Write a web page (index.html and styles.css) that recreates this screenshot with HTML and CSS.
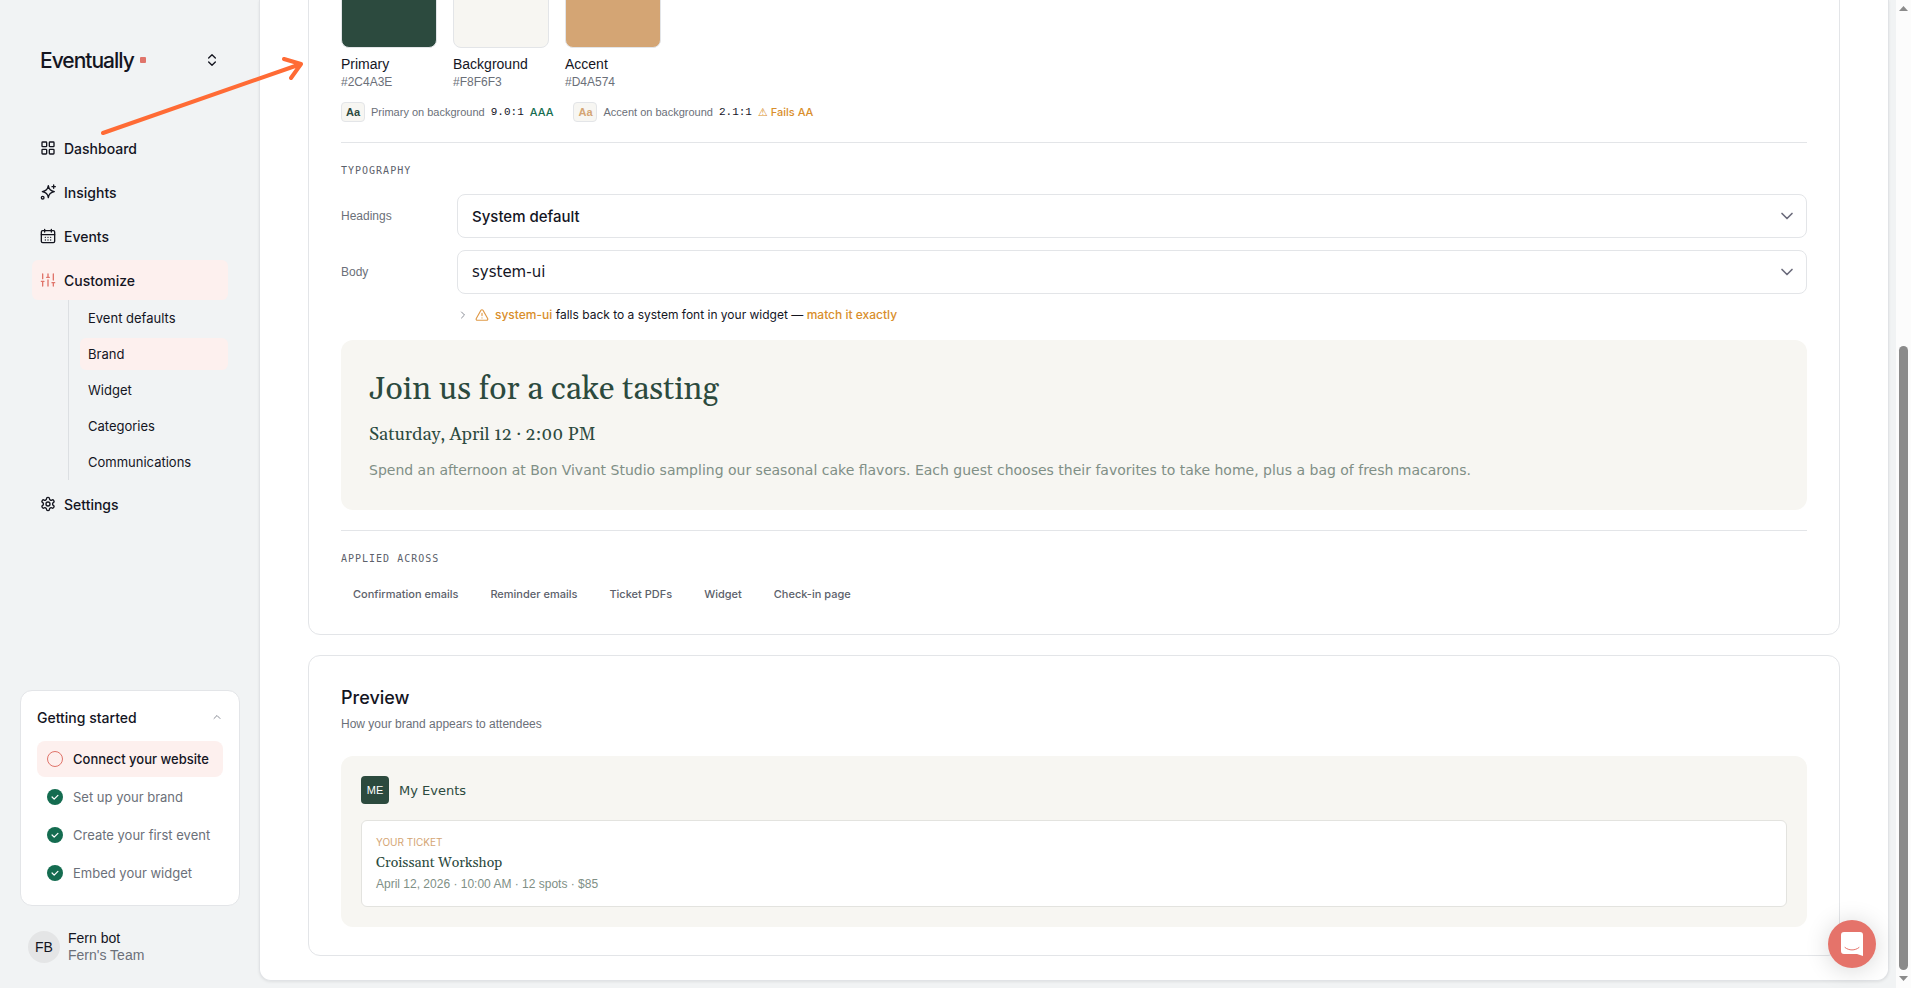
FILE: index.html
```html
<!DOCTYPE html>
<html lang="en">
<head>
<meta charset="UTF-8">
<meta name="viewport" content="width=device-width, initial-scale=1.0">
<title>Brand - Eventually</title>
<link rel="stylesheet" href="styles.css">
</head>
<body>
<div class="app">
  <aside class="sidebar">
    <button class="workspace" type="button">
      <span class="logo">Eventually</span>
      <span class="logo-dot"></span>
      <svg class="icon" viewBox="0 0 24 24"><path d="m7 15 5 5 5-5"/><path d="m7 9 5-5 5 5"/></svg>
    </button>

    <nav class="nav">
      <a class="nav-item" href="#">
        <svg class="icon" viewBox="0 0 24 24"><rect x="3" y="3" width="7" height="7" rx="1"/><rect x="14" y="3" width="7" height="7" rx="1"/><rect x="14" y="14" width="7" height="7" rx="1"/><rect x="3" y="14" width="7" height="7" rx="1"/></svg>
        Dashboard
      </a>
      <a class="nav-item" href="#">
        <svg class="icon" viewBox="0 0 24 24"><path d="M12.500 2.500c.8 5.600 3 8 9 9-6 1-8.200 3.400-9 9-.8-5.600-3-8-9-9 6-1 8.200-3.400 9-9Z"/><path d="M20.500 1.500v5M23 4h-5"/><circle cx="4" cy="20.500" r="2"/></svg>
        Insights
      </a>
      <a class="nav-item" href="#">
        <svg class="icon" viewBox="0 0 24 24"><rect x="2" y="4" width="20" height="18" rx="2"/><path d="M7 2v4M17 2v4M2 10h20M8 14h.01M12 14h.01M16 14h.01M8 18h.01M12 18h.01M16 18h.01"/></svg>
        Events
      </a>
      <a class="nav-item active" href="#">
        <svg class="icon" viewBox="0 0 24 24"><path d="M4 21v-7M4 10V3M12 21v-9M12 8V3M20 21v-5M20 12V3M2 14h4M10 8h4M18 16h4"/></svg>
        Customize
      </a>
      <div class="subnav">
        <a class="subnav-item" href="#">Event defaults</a>
        <a class="subnav-item active" href="#">Brand</a>
        <a class="subnav-item" href="#">Widget</a>
        <a class="subnav-item" href="#">Categories</a>
        <a class="subnav-item" href="#">Communications</a>
      </div>
      <a class="nav-item" href="#">
        <svg class="icon" viewBox="0 0 24 24"><path d="M12.220 2h-.440a2 2 0 0 0-2 2v.180a2 2 0 0 1-1 1.730l-.430.250a2 2 0 0 1-2 0l-.150-.080a2 2 0 0 0-2.730.730l-.220.380a2 2 0 0 0 .730 2.730l.150.100a2 2 0 0 1 1 1.720v.510a2 2 0 0 1-1 1.740l-.150.090a2 2 0 0 0-.730 2.730l.220.380a2 2 0 0 0 2.730.730l.150-.080a2 2 0 0 1 2 0l.430.250a2 2 0 0 1 1 1.730V20a2 2 0 0 0 2 2h.440a2 2 0 0 0 2-2v-.180a2 2 0 0 1 1-1.730l.430-.250a2 2 0 0 1 2 0l.150.080a2 2 0 0 0 2.730-.730l.220-.390a2 2 0 0 0-.730-2.730l-.150-.080a2 2 0 0 1-1-1.740v-.500a2 2 0 0 1 1-1.740l.150-.090a2 2 0 0 0 .730-2.730l-.220-.380a2 2 0 0 0-2.730-.730l-.150.080a2 2 0 0 1-2 0l-.430-.250a2 2 0 0 1-1-1.730V4a2 2 0 0 0-2-2z"/><circle cx="12" cy="12" r="3"/></svg>
        Settings
      </a>
    </nav>

    <section class="started">
      <button class="started-head" type="button">
        <span>Getting started</span>
        <svg class="icon" viewBox="0 0 24 24"><path d="m6 15 6-6 6 6"/></svg>
      </button>
      <a class="step current" href="#"><span class="step-mark"></span>Connect your website</a>
      <a class="step" href="#"><span class="step-mark done"><svg class="icon" viewBox="0 0 24 24"><path d="m5 12 5 5 9-9"/></svg></span>Set up your brand</a>
      <a class="step" href="#"><span class="step-mark done"><svg class="icon" viewBox="0 0 24 24"><path d="m5 12 5 5 9-9"/></svg></span>Create your first event</a>
      <a class="step" href="#"><span class="step-mark done"><svg class="icon" viewBox="0 0 24 24"><path d="m5 12 5 5 9-9"/></svg></span>Embed your widget</a>
    </section>

    <button class="user" type="button">
      <span class="avatar">FB</span>
      <span class="user-text">
        <span>Fern bot</span>
        <span class="team">Fern's Team</span>
      </span>
    </button>
  </aside>

  <main class="panel">
    <section class="card">
      <div class="swatches">
        <div class="swatch">
          <button class="swatch-color primary" type="button" aria-label="Primary"></button>
          <span class="swatch-name">Primary</span>
          <span class="swatch-hex">#2C4A3E</span>
        </div>
        <div class="swatch">
          <button class="swatch-color background" type="button" aria-label="Background"></button>
          <span class="swatch-name">Background</span>
          <span class="swatch-hex">#F8F6F3</span>
        </div>
        <div class="swatch">
          <button class="swatch-color accent" type="button" aria-label="Accent"></button>
          <span class="swatch-name">Accent</span>
          <span class="swatch-hex">#D4A574</span>
        </div>
      </div>

      <div class="contrast">
        <div class="contrast-item">
          <span class="aa">Aa</span>
          <span>Primary on background</span>
          <span class="ratio">9.0:1</span>
          <span class="pass">AAA</span>
        </div>
        <div class="contrast-item">
          <span class="aa aa-accent">Aa</span>
          <span>Accent on background</span>
          <span class="ratio">2.1:1</span>
          <span class="fail"><span class="fail-mark">⚠</span> Fails AA</span>
        </div>
      </div>

      <div class="block">
        <h3 class="label">Typography</h3>
        <div class="fields">
          <div class="field">
            <label for="headings">Headings</label>
            <div class="select">
              <select class="font-heading" id="headings"><option>System default</option></select>
              <svg class="icon" viewBox="0 0 24 24"><path d="m6 9 6 6 6-6"/></svg>
            </div>
          </div>
          <div class="field">
            <label for="body">Body</label>
            <div class="select">
              <select class="font-body" id="body"><option>system-ui</option></select>
              <svg class="icon" viewBox="0 0 24 24"><path d="m6 9 6 6 6-6"/></svg>
            </div>
          </div>
        </div>
        <div class="notice">
          <svg class="icon notice-chevron" viewBox="0 0 24 24"><path d="m9 18 6-6-6-6"/></svg>
          <svg class="icon notice-warn" viewBox="0 0 24 24"><path d="m21.700 18-8-14a2 2 0 0 0-3.500 0l-8 14A2 2 0 0 0 4 21h16a2 2 0 0 0 1.700-3Z"/><path d="M12 9v4M12 17h.01"/></svg>
          <span><b>system-ui</b> falls back to a system font in your widget — <a href="#">match it exactly</a></span>
        </div>
        <div class="sample">
          <h2>Join us for a cake tasting</h2>
          <h4>Saturday, April 12 · 2:00 PM</h4>
          <p>Spend an afternoon at Bon Vivant Studio sampling our seasonal cake flavors. Each guest chooses their favorites to take home, plus a bag of fresh macarons.</p>
        </div>
      </div>

      <div class="block">
        <h3 class="label">Applied across</h3>
        <div class="tags">
          <span class="tag">Confirmation emails</span>
          <span class="tag">Reminder emails</span>
          <span class="tag">Ticket PDFs</span>
          <span class="tag">Widget</span>
          <span class="tag">Check-in page</span>
        </div>
      </div>
    </section>

    <section class="card">
      <h2 class="card-title">Preview</h2>
      <p class="card-sub">How your brand appears to attendees</p>
      <div class="preview">
        <div class="preview-head">
          <span class="preview-logo">ME</span>
          <span>My Events</span>
        </div>
        <div class="ticket">
          <span class="ticket-label">YOUR TICKET</span>
          <span class="ticket-title">Croissant Workshop</span>
          <span class="ticket-meta">April 12, 2026 · 10:00 AM · 12 spots · $85</span>
        </div>
      </div>
    </section>
  </main>

  <div class="scrollbar">
    <svg viewBox="0 0 9 5"><path d="M0 5 4.500 0 9 5z"/></svg>
    <div class="thumb"></div>
    <svg viewBox="0 0 9 5"><path d="M0 0 4.500 5 9 0z"/></svg>
  </div>
</div>

<svg class="pointer" viewBox="0 0 208 84"><path d="M5 78 203 9M186 4 203 9 193 23"/></svg>

<button class="chat" type="button" aria-label="Chat">
  <svg viewBox="0 0 22 24"><path class="bubble" d="M3 0h16a3 3 0 0 1 3 3v21l-6-2H3a3 3 0 0 1-3-3V3a3 3 0 0 1 3-3z"/><path class="smile" d="M4 15.500c4 3.300 10 3.300 14 0"/></svg>
</button>
</body>
</html>
```

FILE: styles.css
```css
* {
  box-sizing: border-box;
}
body {
  margin: 0;
  font-family: Inter, "Liberation Sans", sans-serif;
  font-size: 14px;
  color: #14151f;
  background-color: #f1f3f4;
}
h2, h3, h4, p {
  margin: 0;
  font-weight: 400;
}
a {
  color: inherit;
  text-decoration: none;
}
button, select {
  font: inherit;
  color: inherit;
  background: none;
  border: 0;
  padding: 0;
  text-align: left;
}
.icon {
  width: 16px;
  height: 16px;
  flex: none;
  fill: none;
  stroke: currentColor;
  stroke-width: 2;
  stroke-linecap: round;
  stroke-linejoin: round;
}
.app {
  display: flex;
  height: 100vh;
  overflow: hidden;
}

/* sidebar */
.sidebar {
  display: flex;
  flex-direction: column;
  flex: none;
  width: 259px;
  padding: 40px 19px 24px 20px;
}
.workspace {
  display: flex;
  align-items: center;
  height: 40px;
  margin: 0 20px;
}
.logo {
  font-size: 21px;
  font-weight: 500;
  letter-spacing: -1px;
}
.logo-dot {
  width: 6px;
  height: 6px;
  margin-left: 6px;
  border-radius: 1px;
  background-color: #e0746a;
}
.workspace .icon {
  margin-left: auto;
}
.nav {
  display: flex;
  flex-direction: column;
  gap: 4px;
  margin: 48px 12px 0;
}
.nav-item {
  display: flex;
  align-items: center;
  gap: 8px;
  height: 40px;
  padding: 0 8px;
  border-radius: 6px;
  font-weight: 500;
}
.nav-item.active, .subnav-item.active, .step.current {
  background-color: #fdf0ee;
}
.nav-item.active .icon {
  color: #e0746a;
}
.subnav {
  display: flex;
  flex-direction: column;
  gap: 4px;
  margin: -4px 0 0 36px;
  padding: 2px 0 2px 11px;
  border-left: 1px solid #dcdfe2;
}
.subnav-item {
  padding: 0 8px;
  border-radius: 6px;
  font-size: 13px;
  line-height: 32px;
}
.started {
  display: flex;
  flex-direction: column;
  gap: 2px;
  margin-top: auto;
  padding: 14px 16px;
  border: 1px solid #e3e5e8;
  border-radius: 12px;
  background-color: #fff;
}
.started-head {
  display: flex;
  align-items: center;
  justify-content: space-between;
  height: 24px;
  margin-bottom: 10px;
  font-weight: 500;
}
.started-head .icon {
  width: 12px;
  height: 12px;
  color: #8a8d96;
}
.step {
  display: flex;
  align-items: center;
  gap: 10px;
  height: 36px;
  padding: 0 10px;
  border-radius: 8px;
  font-size: 13px;
  color: #6b7079;
}
.step.current {
  color: #14151f;
  font-weight: 500;
}
.step-mark {
  display: flex;
  align-items: center;
  justify-content: center;
  width: 16px;
  height: 16px;
  border: 1px solid #e0746a;
  border-radius: 50%;
}
.step-mark.done {
  border: 0;
  color: #fff;
  background-color: #146c50;
}
.step-mark .icon {
  width: 10px;
  height: 10px;
  stroke-width: 3;
}
.user {
  display: flex;
  align-items: center;
  gap: 8px;
  margin: 24px 8px 0;
  font-family: "Liberation Sans", sans-serif;
}
.avatar {
  width: 32px;
  border-radius: 50%;
  line-height: 32px;
  text-align: center;
  background-color: #e4e5e6;
}
.user-text {
  display: flex;
  flex-direction: column;
  line-height: 17px;
}
.team {
  color: #6b7079;
}

/* main column, scrolled to its end */
.panel {
  display: flex;
  flex-direction: column;
  justify-content: flex-end;
  flex: 1;
  gap: 20px;
  margin: 0 7px 7px 0;
  padding: 0 48px 24px;
  border: 1px solid #e1e3e6;
  border-top: 0;
  border-radius: 0 0 12px 12px;
  background-color: #fff;
  box-shadow: 0 1px 3px rgba(0, 0, 0, 0.08);
}
.card {
  flex: none;
  padding: 28px 32px;
  border: 1px solid #e3e5e8;
  border-radius: 12px;
}
.swatches {
  display: flex;
  gap: 16px;
  font-family: "Liberation Sans", sans-serif;
}
.swatch {
  display: flex;
  flex-direction: column;
  width: 96px;
}
.swatch-color {
  height: 96px;
  margin-bottom: 6px;
  border: 1px solid #e3e5e8;
  border-radius: 8px;
}
.primary {
  background-color: #2c4a3e;
}
.background {
  background-color: #f7f6f2;
}
.accent {
  background-color: #d4a574;
}
.swatch-name {
  line-height: 20px;
}
.swatch-hex {
  font-size: 12px;
  line-height: 16px;
  color: #6b7079;
}
.contrast {
  display: flex;
  gap: 20px;
  margin: 12px 0 20px;
}
.contrast-item {
  display: flex;
  align-items: center;
  gap: 6px;
  font-family: "Liberation Sans", sans-serif;
  font-size: 11px;
  color: #6b7079;
}
.aa {
  width: 24px;
  border: 1px solid #e3e5e8;
  border-radius: 4px;
  line-height: 18px;
  text-align: center;
  font-weight: 600;
  color: #2c4a3e;
  background-color: #f7f6f2;
}
.aa-accent {
  color: #d4a574;
}
.ratio {
  font-family: "Liberation Mono", monospace;
  color: #14151f;
}
.pass, .fail {
  font-family: Inter, sans-serif;
  font-weight: 500;
}
.pass {
  color: #146c50;
}
.fail {
  color: #d98e2b;
}
.fail-mark {
  font-family: "DejaVu Sans", sans-serif;
  font-weight: 400;
}
.block {
  padding-top: 20px;
  border-top: 1px solid #e3e5e8;
}
.label {
  margin-bottom: 16px;
  font-family: "DejaVu Sans Mono", monospace;
  font-size: 10px;
  line-height: 15px;
  letter-spacing: 1px;
  text-transform: uppercase;
  color: #5c616b;
}
.fields {
  display: flex;
  flex-direction: column;
  gap: 12px;
}
.field {
  display: flex;
  align-items: center;
}
.field label {
  width: 116px;
  font-family: "Liberation Sans", sans-serif;
  font-size: 12px;
  color: #6b7079;
}
.select {
  position: relative;
  flex: 1;
}
.select select {
  display: block;
  width: 100%;
  height: 44px;
  padding: 0 14px;
  border: 1px solid #e3e5e8;
  border-radius: 8px;
  appearance: none;
  background-color: #fff;
}
.select .icon {
  position: absolute;
  right: 10px;
  top: 12px;
  width: 20px;
  height: 20px;
  color: #6b6b7b;
  pointer-events: none;
}
.select .font-heading {
  font-size: 15px;
  font-weight: 500;
}
.select .font-body {
  font-family: "DejaVu Sans", sans-serif;
  font-size: 15px;
}
.notice {
  display: flex;
  align-items: center;
  margin: 12px 0 16px 116px;
  font-size: 12px;
  line-height: 18px;
}
.notice-chevron {
  width: 12px;
  height: 12px;
  margin-right: 6px;
  color: #8a8d96;
}
.notice-warn {
  width: 14px;
  height: 14px;
  margin-right: 6px;
  color: #e09a48;
}
.notice b, .notice a {
  font-weight: 500;
  color: #d98e2b;
}
.sample {
  margin-bottom: 20px;
  padding: 28px;
  border-radius: 12px;
  color: #2c4a3e;
  background-color: #f7f6f2;
}
.sample h2 {
  font-family: Georgia, Gelasio, "Liberation Serif", serif;
  font-size: 32px;
  line-height: 44px;
}
.sample h4 {
  margin: 10px 0;
  font-family: Georgia, Gelasio, "Liberation Serif", serif;
  font-size: 18px;
  line-height: 26px;
}
.sample p {
  font-family: "DejaVu Sans", sans-serif;
  line-height: 24px;
  color: #808f86;
}
.tags {
  display: flex;
  gap: 8px;
}
.tag {
  padding: 0 12px;
  font-size: 11px;
  font-weight: 500;
  line-height: 24px;
  color: #5c616b;
}
.card-title {
  font-size: 18px;
  font-weight: 500;
  line-height: 28px;
}
.card-sub {
  margin: 4px 0 24px;
  font-family: "Liberation Sans", sans-serif;
  font-size: 12px;
  line-height: 16px;
  color: #6b7079;
}
.preview {
  padding: 20px;
  border-radius: 12px;
  background-color: #f7f6f2;
}
.preview-head {
  display: flex;
  align-items: center;
  gap: 10px;
  margin-bottom: 16px;
  font-family: "DejaVu Sans", sans-serif;
  font-size: 13px;
  color: #2c4a3e;
}
.preview-logo {
  width: 28px;
  border-radius: 4px;
  font-family: "Liberation Sans", sans-serif;
  font-size: 11px;
  line-height: 28px;
  text-align: center;
  color: #fff;
  background-color: #2c4a3e;
}
.ticket {
  display: flex;
  flex-direction: column;
  gap: 4px;
  padding: 14px;
  border: 1px solid #e3e3df;
  border-radius: 6px;
  background-color: #fff;
}
.ticket-label {
  font-size: 10px;
  line-height: 14px;
  color: #d4a574;
}
.ticket-title {
  font-family: Georgia, Gelasio, "Liberation Serif", serif;
  line-height: 20px;
  color: #2c4a3e;
}
.ticket-meta {
  font-family: "Liberation Sans", sans-serif;
  font-size: 12px;
  line-height: 15px;
  color: #808f86;
}

.scrollbar {
  display: flex;
  flex-direction: column;
  align-items: center;
  width: 15px;
  padding: 6px 0 7px;
  background-color: #fcfcfc;
}
.scrollbar svg {
  width: 9px;
  height: 5px;
  fill: #8b8b8b;
}
.thumb {
  width: 9px;
  height: 64%;
  margin: auto 0 6px;
  border-radius: 5px;
  background-color: #8b8b8b;
}

/* floats over the page */
.pointer {
  position: absolute;
  left: 98px;
  top: 55px;
  width: 208px;
  height: 84px;
  fill: none;
  stroke: #ff6b35;
  stroke-width: 4;
  stroke-linecap: round;
  stroke-linejoin: round;
}
.chat {
  position: fixed;
  right: 35px;
  bottom: 20px;
  display: flex;
  align-items: center;
  justify-content: center;
  width: 48px;
  height: 48px;
  border-radius: 50%;
  background-color: #e5736a;
  box-shadow: 0 2px 24px rgba(0, 0, 0, 0.16);
}
.chat svg {
  width: 22px;
  height: 24px;
}
.bubble {
  fill: #fff;
}
.smile {
  fill: none;
  stroke: #e5736a;
  stroke-width: 1;
  stroke-linecap: round;
}
```
